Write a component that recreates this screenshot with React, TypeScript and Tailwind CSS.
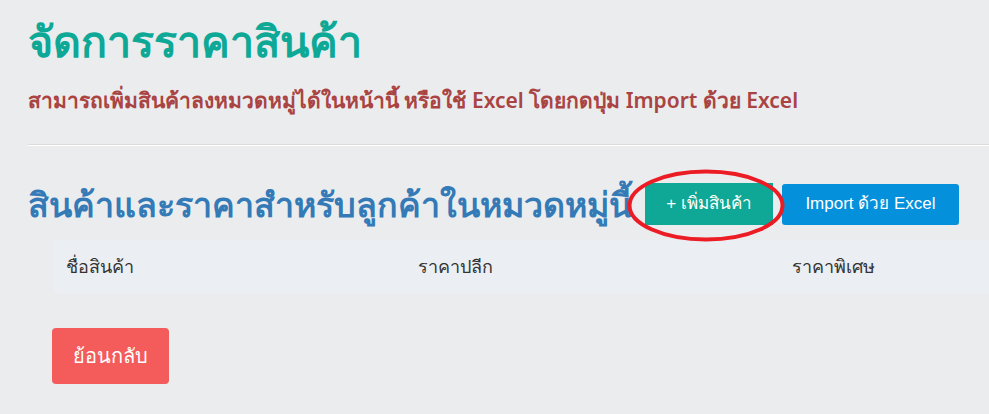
import { FC } from 'react';

/**
 * Price management page
 * Header, hint line, product table header and back button.
 * The red ellipse marks the "add product" button (annotation on the screenshot).
 */
const columns = ['ชื่อสินค้า', 'ราคาปลีก', 'ราคาพิเศษ'];

const App: FC = () => {
  return (
    <div className="min-h-[414px] w-full overflow-hidden bg-[#ebecee] font-['Noto_Sans','DejaVu_Sans',sans-serif]">
      <div className="pl-[28px] pt-[13px]">
        {/* Page title */}
        <h1 className="text-[43px] leading-[56px] font-semibold text-[#0ea896]">
          จัดการราคาสินค้า
        </h1>
        <p className="mt-[17px] text-[21px] leading-[28px] font-semibold text-[#a94442]">
          สามารถเพิ่มสินค้าลงหมวดหมู่ได้ในหน้านี้ หรือใช้ Excel โดยกดปุ่ม Import ด้วย Excel
        </p>
        <hr className="mt-[30px] border-t border-t-[#dcdcdc] border-b border-b-white" />

        {/* Section heading + actions */}
        <div className="mt-[36px] flex h-[44px] items-center">
          <h2 className="whitespace-nowrap text-[34px] leading-[44px] font-semibold text-[#337ab7]">
            สินค้าและราคาสำหรับลูกค้าในหมวดหมู่นี้
          </h2>
          <div className="relative ml-[13px] shrink-0">
            <button className="h-[42px] w-[128px] bg-[#0fa795] font-['Liberation_Sans','Noto_Sans',sans-serif] text-[17px] text-white">
              + เพิ่มสินค้า
            </button>
            {/* Annotation ellipse */}
            <svg
              className="pointer-events-none absolute left-[-18px] top-[-14px]"
              width="158"
              height="73"
              viewBox="0 0 158 73"
            >
              <ellipse
                cx="79"
                cy="36.5"
                rx="76.5"
                ry="34"
                fill="none"
                stroke="#ec1c24"
                strokeWidth="4"
              />
            </svg>
          </div>
          <button className="ml-[9px] h-[41px] w-[177px] shrink-0 rounded-[3px] bg-[#0590dc] font-['Liberation_Sans','Noto_Sans',sans-serif] text-[17px] text-white">
            Import ด้วย Excel
          </button>
        </div>

        {/* Table header */}
        <div className="ml-[26px] mt-[14px] grid h-[53px] grid-cols-[352px_374px_1fr] items-center bg-[#ebeef2] pl-[12px] text-[18px] font-medium text-[#333333]">
          {columns.map((c) => (
            <div key={c}>{c}</div>
          ))}
        </div>

        {/* Back */}
        <button className="ml-[24px] mt-[35px] h-[56px] w-[117px] rounded-[4px] bg-[#f45b5b] text-[20px] font-medium text-white">
          ย้อนกลับ
        </button>
      </div>
    </div>
  );
};

export default App;
